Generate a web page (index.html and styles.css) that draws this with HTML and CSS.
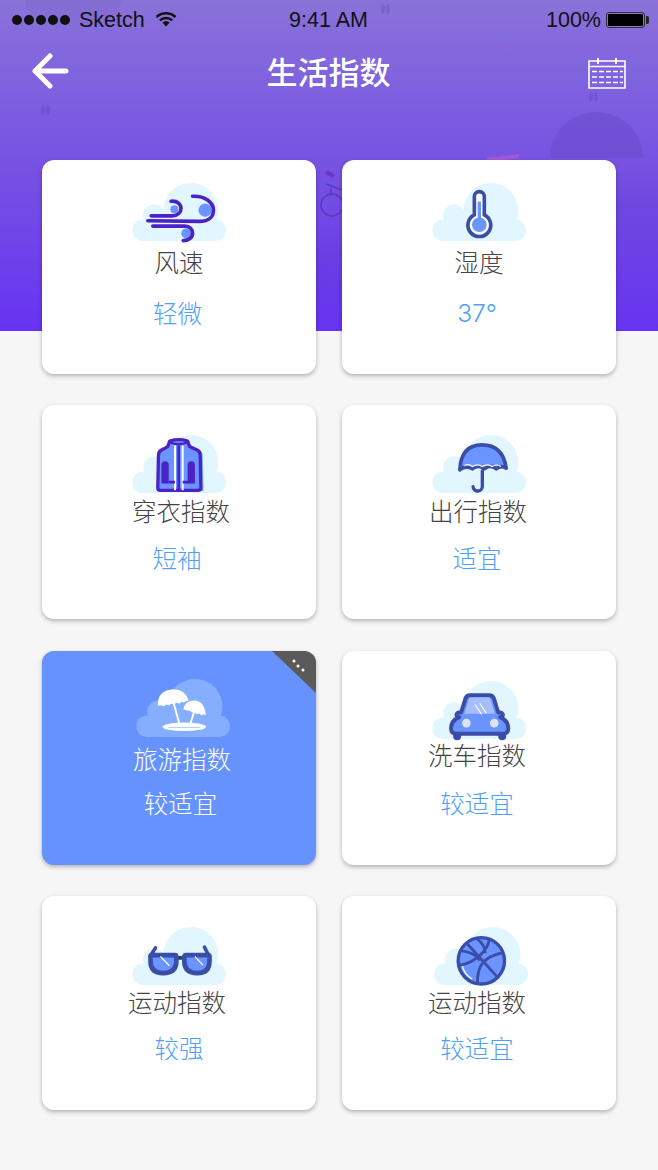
FILE: index.html
```html
<!DOCTYPE html>
<html lang="zh-CN">
<head>
<meta charset="utf-8">
<title>生活指数</title>
<link rel="stylesheet" href="styles.css">
</head>
<body>
<svg class="defs" width="0" height="0" aria-hidden="true">
  <symbol id="cloud" viewBox="0 0 285 175">
    <circle cx="177" cy="83" r="83"/>
    <circle cx="66" cy="98" r="33"/>
    <rect x="0" y="110" width="283" height="65" rx="32"/>
  </symbol>
</svg>
<main class="page">
  <header class="hero">
    <div class="decor">
      <span class="blob blob-top"></span>
      <span class="blob blob-right"></span>
      <span class="grain grain-left"></span>
      <span class="grain grain-right"></span>
      <span class="ribbon"></span>
      <svg class="bike" viewBox="0 0 26 50" width="26" height="50">
        <path d="M8 2l7 5-3 3-7-5z" fill="#6a2fb8"/>
        <path d="M6 16l16 6M11 20v8" fill="none" stroke="#4a3cab" stroke-width="1.5"/>
        <circle cx="12" cy="37" r="11" fill="none" stroke="#4a3cab" stroke-width="1.5"/>
      </svg>
      <span class="drop drop-a"></span>
      <span class="drop drop-b"></span>
      <span class="drop drop-c"></span>
    </div>
    <div class="status">
      <div class="status-left">
        <span class="signal"><i></i><i></i><i></i><i></i><i></i></span>
        <span>Sketch</span>
        <svg class="wifi" viewBox="0 0 22 16" width="22" height="16">
          <path d="M1.500 6a14 14 0 0 1 19 0" fill="none" stroke="#111" stroke-width="2.400"/>
          <path d="M4.800 9.300a9.400 9.400 0 0 1 12.400 0" fill="none" stroke="#111" stroke-width="2.400"/>
          <path d="M7.400 11.600a5.400 5.400 0 0 1 7.200 0L11 15.500z" fill="#111"/>
        </svg>
      </div>
      <span>9:41 AM</span>
      <div class="status-right">
        <span>100%</span>
        <span class="battery"><i></i></span>
      </div>
    </div>
    <nav class="nav">
      <svg class="nav-back" viewBox="0 0 38 36" width="38" height="36">
        <path d="M35 18H4M19 3L4 18l15 15" fill="none" stroke="#fff" stroke-width="5" stroke-linecap="round" stroke-linejoin="round"/>
      </svg>
      <h1 class="nav-title">生活指数</h1>
      <svg class="nav-cal" viewBox="0 0 38 32" width="38" height="32">
        <path d="M1 4h36v27H1z" fill="none" stroke="#fff" stroke-width="1.600"/>
        <path d="M1 9.500h36" stroke="#fff" stroke-width="1.600"/>
        <path d="M10 1v6M28 1v6" stroke="#fff" stroke-width="2"/>
        <path d="M4 14.500h31M4 20h31M4 25.500h31" stroke="#fff" stroke-width="1.600" stroke-dasharray="5 2"/>
      </svg>
    </nav>
  </header>

  <section class="grid">
    <article class="card card-wind">
      <svg class="icon" viewBox="65 38 285 175">
        <use href="#cloud" class="cloud" x="65" y="38" width="285" height="175"/>
        <g class="fill-blue">
          <circle cx="192" cy="117" r="12"/>
          <circle cx="285" cy="120" r="20"/>
          <circle cx="228" cy="190" r="15"/>
        </g>
        <g class="line-violet">
          <path d="M182 93c20-2 30 10 30 22s-10 22-28 22h-62"/>
          <path d="M247 78c36-2 63 18 63 42s-20 34-42 34l-156-2"/>
          <path d="M127 168h96c16 0 24 10 24 22s-12 22-28 22"/>
        </g>
      </svg>
      <h2 class="label">风速</h2>
      <p class="value">轻微</p>
    </article>

    <article class="card card-humid">
      <svg class="icon" viewBox="65 38 285 175">
        <use href="#cloud" class="cloud" x="65" y="38" width="285" height="175"/>
        <path class="thermo" d="M192 134V79a15 15 0 0 1 30 0v55a34.500 34.500 0 1 1-30 0z"/>
        <rect class="fill-blue" x="202" y="94" width="10" height="60"/>
        <circle class="fill-blue" cx="207" cy="164" r="22"/>
      </svg>
      <h2 class="label">湿度</h2>
      <p class="value value-latin">37°</p>
    </article>

    <article class="card card-dress">
      <svg class="icon" viewBox="65 30 285 175">
        <use href="#cloud" class="cloud" x="65" y="30" width="285" height="175"/>
        <path class="jacket-shadow" d="M240 60l28 16q10 6 10 18l2 106h-10z"/>
        <path class="jacket" d="M178 48q27-8 54 0l6 17 24 11q8 4 8 16l2 98q0 7-10 7H150q-8 0-8-7l2-98q0-12 8-16l20-11z"/>
        <path class="jacket-neck" d="M178 52q27 12 54 0"/>
        <path class="jacket-sleeve" d="M153 176v-56a11 11 0 0 1 22 0v56zM232 176v-56a11 11 0 0 1 22 0v56z"/>
        <path class="jacket-edge" d="M194 62v135M217 62v135"/>
        <path class="jacket-zip" d="M205 62v135M175 172h19M217 172h17"/>
      </svg>
      <h2 class="label">穿衣指数</h2>
      <p class="value">短袖</p>
    </article>

    <article class="card card-travel">
      <svg class="icon" viewBox="65 30 285 175">
        <use href="#cloud" class="cloud" x="65" y="30" width="285" height="175"/>
        <path class="umbrella" d="M148 135q4-75 67-75t73 70q-16-10-30 2-18-14-36 0-18-14-36 0-20-12-38 3z"/>
        <path class="umbrella-wave" d="M162 123q12-8 24 2 16-10 30 0 16-10 30 0 14-9 26 0"/>
        <path class="umbrella-stick" d="M216 138v46a14 14 0 0 1-28 2"/>
      </svg>
      <h2 class="label">出行指数</h2>
      <p class="value">适宜</p>
    </article>

    <article class="card card-tour is-active">
      <svg class="icon" viewBox="75 87 285 175">
        <use href="#cloud" class="cloud" x="75" y="87" width="285" height="175"/>
        <g class="beach">
          <path d="M140 168q-2-48 48-50 34 0 45 34l-8 2-6 4-7-2-8 6-7-4-8 6-8-2-8 4-7-2-8 5-7-3z"/>
          <path d="M217 178q4-26 34-26 30 2 34 44l-7-3-7 3-6-5-8 2-6-6-8 1-6-5-8-1z"/>
          <path class="beach-pole" d="M188 160l17 62M250 185l-12 37"/>
          <ellipse cx="220" cy="231" rx="66" ry="13"/>
          <path class="beach-rim" d="M172 233h96"/>
        </g>
      </svg>
      <h2 class="label">旅游指数</h2>
      <p class="value">较适宜</p>
      <svg class="corner" viewBox="0 0 44 44" width="44" height="44">
        <path d="M0 0H44V42z" fill="#5a5a5a"/>
        <circle cx="22" cy="10" r="1.500" fill="#fff"/>
        <circle cx="26" cy="15" r="1.500" fill="#fff"/>
        <circle cx="31" cy="19" r="1.500" fill="#fff"/>
      </svg>
    </article>

    <article class="card card-wash">
      <svg class="icon" viewBox="65 33 285 175">
        <use href="#cloud" class="cloud" x="65" y="33" width="285" height="175"/>
        <path class="car-tyre" d="M140 186v14M276 186v14"/>
        <path class="car" d="M122 178q-2-24 24-36l-6-2q-6-8 6-12h6l13-42q3-10 14-10h58q11 0 14 10l13 42h6q12 4 6 12l-6 2q26 12 24 36 0 14-16 14H138q-16 0-16-14z"/>
        <path class="car-glass" d="M162 132l13-44q2-6 8-6h50q6 0 8 6l13 44z"/>
        <path class="car-shine" d="M194 104l20 30M208 100l20 30"/>
        <circle class="car-lamp" cx="168" cy="160" r="13"/>
        <circle class="car-lamp" cx="252" cy="160" r="13"/>
      </svg>
      <h2 class="label">洗车指数</h2>
      <p class="value">较适宜</p>
    </article>

    <article class="card card-sport">
      <svg class="icon" viewBox="65 35 285 175">
        <use href="#cloud" class="cloud" x="65" y="35" width="285" height="175"/>
        <path class="glass-arm" d="M120 122l15-24M296 122l-13-26"/>
        <path class="glass-bridge" d="M196 128h30"/>
        <path class="glass" d="M124 120h70q4 0 4 6v12q0 36-40 36-38 0-38-36v-14q0-4 4-4z"/>
        <path class="glass" d="M228 120h66q4 0 4 4v14q0 36-36 36-40 0-40-36v-12q0-6 6-6z"/>
        <path class="glass-shine" d="M150 124l27 28M254 124l24 26"/>
      </svg>
      <h2 class="label">运动指数</h2>
      <p class="value">较强</p>
    </article>

    <article class="card card-ball">
      <svg class="icon" viewBox="70 35 285 175">
        <use href="#cloud" class="cloud" x="70" y="35" width="285" height="175"/>
        <circle class="ball" cx="212" cy="137" r="70"/>
        <path class="ball-shine" d="M154 150q6 28 30 42"/>
        <g class="ball-seam">
          <path d="M168 84l96 106"/>
          <path d="M150 106q44 6 58 30M236 72q-6 40-56 68-20 10-38 10"/>
          <path d="M278 112q-44 8-64 34-14 20-14 60"/>
          <path d="M198 70q24 16 26 44"/>
        </g>
      </svg>
      <h2 class="label">运动指数</h2>
      <p class="value">较适宜</p>
    </article>
  </section>
</main>
</body>
</html>
```

FILE: styles.css
```css
* { box-sizing: border-box; }

html, body { margin: 0; padding: 0; }

body {
  background: #f6f6f6;
  font-family: "Noto Sans CJK SC", "Liberation Sans", sans-serif;
}

.defs { position: absolute; }

.page { width: 658px; min-height: 1170px; }

/* Purple header band; the cards overlap its lower part */
.hero {
  position: relative;
  height: 331px;
  margin-bottom: -171px;
  overflow: hidden;
  background: linear-gradient(180deg, #8a72d9 0%, #7c5ee0 32%, #7752e2 50%, #6733f2 100%);
}

.decor { position: absolute; inset: 0; }

.blob { position: absolute; display: block; }
.blob-top {
  left: 25px; top: -30px; width: 96px; height: 60px;
  border-radius: 50%;
  background: linear-gradient(180deg, rgba(70, 50, 150, .2), rgba(70, 50, 150, 0));
}
.blob-right {
  left: 550px; top: 112px; width: 93px; height: 46px;
  border-radius: 47px 47px 0 0;
  background: rgba(60, 40, 140, .15);
}

.grain { position: absolute; display: block; }
.grain-left {
  left: 316px; top: 225px; width: 26px; height: 106px;
  background: linear-gradient(180deg, rgba(60, 30, 150, 0), rgba(60, 30, 150, .1) 30%, rgba(60, 30, 150, 0));
}
.grain-right {
  left: 616px; top: 165px; width: 42px; height: 166px;
  background: linear-gradient(180deg, rgba(60, 30, 150, 0), rgba(60, 30, 150, .08) 25%, rgba(60, 30, 150, 0));
}

.ribbon {
  position: absolute;
  left: 487px; top: 156px; width: 32px; height: 4px;
  background: rgba(190, 90, 210, .6);
  transform: rotate(-6deg);
}

.bike { position: absolute; left: 320px; top: 168px; opacity: .8; }

.drop {
  position: absolute;
  width: 9px; height: 11px;
  background:
    radial-gradient(ellipse 2px 5px at 2px 5px, rgba(60, 40, 140, .18) 98%, transparent),
    radial-gradient(ellipse 2px 5px at 7px 5px, rgba(60, 40, 140, .18) 98%, transparent);
}
.drop-a { left: 381px; top: 4px; }
.drop-b { left: 41px; top: 105px; }
.drop-c { left: 589px; top: 92px; }

.status {
  position: relative;
  display: grid;
  grid-template-columns: 1fr auto 1fr;
  align-items: center;
  height: 40px;
  padding: 0 13px 0 12px;
  font-family: "Liberation Sans", sans-serif;
  font-size: 21.5px;
  color: #111;
}

.status-left { display: flex; align-items: center; }
.status-right { display: flex; align-items: center; justify-content: flex-end; gap: 5px; }

.signal { display: flex; gap: 2px; margin-right: 9px; }
.signal i {
  display: block;
  width: 10px; height: 10px;
  border-radius: 50%;
  background: #111;
}

.wifi { margin: -2px 0 0 10px; }

.battery {
  position: relative;
  display: block;
  width: 39px; height: 16px;
  padding: 1px;
  border: 1px solid #333;
  border-radius: 3px;
}
.battery i { display: block; height: 100%; background: #000; border-radius: 1px; }
.battery::after {
  content: "";
  position: absolute;
  right: -5px; top: 3px;
  width: 3px; height: 8px;
  background: #222;
  border-radius: 0 2px 2px 0;
}

.nav {
  position: relative;
  display: grid;
  grid-template-columns: 1fr auto 1fr;
  align-items: center;
  height: 62px;
  padding: 0 32px 0 31px;
}
.nav-title {
  margin: 0;
  font-size: 31px;
  line-height: 62px;
  font-weight: 500;
  color: #fff;
}
.nav-cal { justify-self: end; margin-top: 3px; }

/* Card grid */
.grid {
  position: relative;
  display: grid;
  grid-template-columns: 274px 274px;
  column-gap: 26px;
  row-gap: 31px;
  padding: 0 42px;
}

.card {
  --icon-top: 30px;
  --icon-dx: 0px;
  --label-gap: 3px;
  --label-dx: 0px;
  --value-gap: 17px;
  --value-dx: 0px;
  position: relative;
  display: flex;
  flex-direction: column;
  align-items: center;
  height: 214px;
  padding-top: var(--icon-top);
  overflow: hidden;
  background: #fff;
  border-radius: 12px;
  box-shadow: 0 2px 4px rgba(0, 0, 0, .28);
}

.card-wind { --icon-top: 23px; --label-gap: 6px; --value-gap: 21px; --value-dx: -1.5px; }
.card-humid { --icon-top: 23px; --label-gap: 6px; --value-gap: 21px; --value-dx: -2px; }
.card-dress { --label-dx: 2px; --value-dx: -2px; }
.card-travel { --label-dx: -1px; --value-dx: -2px; }
.card-tour { --icon-top: 28px; --icon-dx: 4px; --label-gap: 7px; --label-dx: 3px; --value-gap: 14px; --value-dx: 1.5px; margin-top: 1px; }
.card-wash { --label-gap: 1px; --label-dx: -2px; --value-gap: 18px; --value-dx: -2px; margin-top: 1px; }
.card-sport { --icon-top: 31px; --label-gap: 2px; --label-dx: -2px; --value-gap: 16px; }
.card-ball { --icon-top: 31px; --icon-dx: 2px; --label-gap: 2px; --label-dx: -2px; --value-gap: 16px; --value-dx: -2px; }

.icon {
  display: block;
  flex: none;
  width: 95px;
  height: 58px;
  margin-left: calc(var(--icon-dx) * 2);
  overflow: visible;
}

.label {
  margin: var(--label-gap) 0 0 calc(var(--label-dx) * 2);
  font-size: 24.5px;
  line-height: 30px;
  font-weight: 300;
  color: #444;
}

.value {
  margin: var(--value-gap) 0 0 calc(var(--value-dx) * 2);
  font-size: 24.5px;
  line-height: 30px;
  font-weight: 300;
  color: #4f9ff8;
}

.value-latin { font-family: "Inter", "Liberation Sans", sans-serif; font-weight: 300; }

.is-active { background: #6592fd; }
.is-active .label, .is-active .value { color: #fff; }

.corner { position: absolute; top: 0; right: 0; }

/* Icon paints */
.cloud { fill: #e1f6ff; }
.is-active .cloud { fill: #86aeff; }

.fill-blue { fill: #6a94ff; }

.line-violet {
  fill: none;
  stroke: #4d22c4;
  stroke-width: 11;
  stroke-linecap: round;
}

.thermo { fill: #fff; stroke: #3a4ea8; stroke-width: 11; }

.jacket { fill: #6a94ff; stroke: #4d22c4; stroke-width: 10; stroke-linejoin: round; }
.jacket-shadow { fill: #6fc0ff; }
.jacket-neck { fill: none; stroke: #4d22c4; stroke-width: 7; }
.jacket-sleeve { fill: #4d22c4; }
.jacket-edge { fill: none; stroke: #fff; stroke-width: 6; }
.jacket-zip { fill: none; stroke: #4d22c4; stroke-width: 8; }

.umbrella { fill: #6a94ff; stroke: #3a4ea8; stroke-width: 11; stroke-linejoin: round; }
.umbrella-wave { fill: none; stroke: #fff; stroke-width: 3.5; }
.umbrella-stick { fill: none; stroke: #3a4ea8; stroke-width: 10; stroke-linecap: round; }

.beach { fill: #fff; }
.beach-pole { fill: none; stroke: #fff; stroke-width: 6; }
.beach-rim { fill: none; stroke: #86aeff; stroke-width: 2; }

.car { fill: #6a94ff; stroke: #3a4ea8; stroke-width: 12; stroke-linejoin: round; }
.car-tyre { fill: none; stroke: #3a4ea8; stroke-width: 24; stroke-linecap: round; }
.car-glass { fill: #a6beff; }
.car-shine { fill: none; stroke: #fff; stroke-width: 3.5; }
.car-lamp { fill: #dfe4ee; }

.glass { fill: #6a94ff; stroke: #3a4ea8; stroke-width: 14; stroke-linejoin: round; }
.glass-arm { fill: none; stroke: #3a4ea8; stroke-width: 11; stroke-linecap: round; }
.glass-bridge { fill: none; stroke: #333a60; stroke-width: 11; }
.glass-shine { fill: none; stroke: #fff; stroke-width: 3.5; }

.ball { fill: #6a94ff; stroke: #3a4ea8; stroke-width: 10; }
.ball-shine { fill: none; stroke: #fff; stroke-width: 4; }
.ball-seam { fill: none; stroke: #3a4ea8; stroke-width: 8.5; }
```
